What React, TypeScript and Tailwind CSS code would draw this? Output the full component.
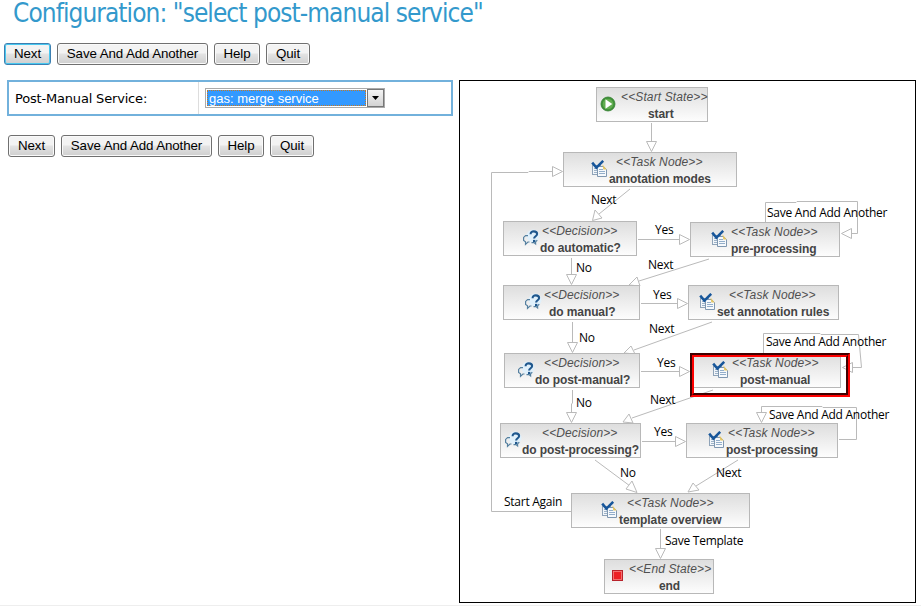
import React from 'react';

type Kind = 'start' | 'task' | 'decision' | 'end';

interface NodeSpec {
  kind: Kind;
  title: string;
  x: number;
  y: number;
  w: number;
  iconX: number;
  typeX: number;
  titleX: number;
}

// Coordinates are relative to the inside of the diagram panel.
const nodes: NodeSpec[] = [
  { kind: 'start', title: 'start', x: 136, y: 6, w: 112, iconX: 140, typeX: 161, titleX: 188 },
  { kind: 'task', title: 'annotation modes', x: 103, y: 71, w: 174, iconX: 131, typeX: 156, titleX: 149 },
  { kind: 'decision', title: 'do automatic?', x: 43, y: 140, w: 134, iconX: 62, typeX: 82, titleX: 80 },
  { kind: 'task', title: 'pre-processing', x: 230, y: 141, w: 150, iconX: 251, typeX: 271, titleX: 271 },
  { kind: 'decision', title: 'do manual?', x: 43, y: 204, w: 137, iconX: 64, typeX: 84, titleX: 89 },
  { kind: 'task', title: 'set annotation rules', x: 228, y: 204, w: 151, iconX: 239, typeX: 269, titleX: 257 },
  { kind: 'decision', title: 'do post-manual?', x: 44, y: 272, w: 136, iconX: 57, typeX: 84, titleX: 75 },
  { kind: 'task', title: 'post-manual', x: 231, y: 272, w: 150, iconX: 252, typeX: 272, titleX: 280 },
  { kind: 'decision', title: 'do post-processing?', x: 40, y: 342, w: 141, iconX: 44, typeX: 82, titleX: 62 },
  { kind: 'task', title: 'post-processing', x: 226, y: 342, w: 152, iconX: 248, typeX: 268, titleX: 266 },
  { kind: 'task', title: 'template overview', x: 111, y: 412, w: 179, iconX: 141, typeX: 167, titleX: 159 },
  { kind: 'end', title: 'end', x: 144, y: 478, w: 110, iconX: 150, typeX: 169, titleX: 199 },
];

const typeNames: Record<Kind, string> = {
  start: '<<Start State>>',
  task: '<<Task Node>>',
  decision: '<<Decision>>',
  end: '<<End State>>',
};

const labels: { text: string; x: number; y: number }[] = [
  { text: 'Next', x: 131, y: 111 },
  { text: 'Yes', x: 195, y: 141 },
  { text: 'Save And Add Another', x: 307, y: 124 },
  { text: 'No', x: 116, y: 179 },
  { text: 'Next', x: 188, y: 176 },
  { text: 'Yes', x: 193, y: 206 },
  { text: 'No', x: 119, y: 249 },
  { text: 'Next', x: 189, y: 240 },
  { text: 'Save And Add Another', x: 306, y: 253 },
  { text: 'Yes', x: 197, y: 274 },
  { text: 'No', x: 116, y: 314 },
  { text: 'Next', x: 190, y: 311 },
  { text: 'Save And Add Another', x: 309, y: 326 },
  { text: 'Yes', x: 194, y: 343 },
  { text: 'No', x: 160, y: 384 },
  { text: 'Next', x: 256, y: 384 },
  { text: 'Start Again', x: 44, y: 413 },
  { text: 'Save Template', x: 205, y: 452 },
];

// Each edge is a polyline plus the outline of its arrow head.
const edges: { line: string; head: string }[] = [
  { line: '191.5,42 191.5,61', head: '186.5,60.5 196.5,60.5 191.5,70.5' },
  { line: '111,430.5 31.5,430.5 31.5,91.5 68,91.5 69,90.5 92,90.5', head: '92.5,85.5 92.5,95.5 102.5,90.5' },
  { line: '170,108 139,133', head: '135,129 142,137 132.5,139.5' },
  { line: '178,158.5 219,158.5', head: '219.5,153.5 219.5,163.5 229.5,158.5' },
  { line: '305.5,141 305.5,121.5 336,121.5 337,120.5 397.5,120.5 397.5,152.5 391,152.5', head: '391.5,147.5 391.5,157.5 381.5,152.5' },
  { line: '111.5,177 111.5,194', head: '106.5,193.5 116.5,193.5 111.5,203.5' },
  { line: '249,178 179,200', head: '177,196 180,205 169,204' },
  { line: '181,222.5 217,222.5', head: '217.5,217.5 217.5,227.5 227.5,222.5' },
  { line: '112.5,241 112.5,262', head: '107.5,261.5 117.5,261.5 112.5,271.5' },
  { line: '252,241 174,269', head: '171,265 175,273 164,272' },
  { line: '303.5,272 303.5,252.5 360,252.5 361,253.5 398.5,253.5 401.5,286.5 392,286.5', head: '392.5,281.5 392.5,291.5 382.5,286.5' },
  { line: '181,290.5 219,290.5', head: '219.5,285.5 219.5,295.5 229.5,290.5' },
  { line: '112.5,309 112.5,322 111.5,323 111.5,331', head: '106.5,331.5 116.5,331.5 111.5,341.5' },
  { line: '253,309 172,337', head: '169,333 173,342 163,341' },
  { line: '379,358.5 396.5,358.5 396.5,326.5 363,326.5 362,325.5 301.5,325.5 301.5,331', head: '296.5,331.5 306.5,331.5 301.5,341.5' },
  { line: '182,360.5 215,360.5', head: '215.5,355.5 215.5,365.5 225.5,360.5' },
  { line: '135,379 170,405', head: '166,408 172,400 177,411.5' },
  { line: '278,379 236,405', head: '233,402 239,409 228,411' },
  { line: '200.5,448 200.5,467', head: '195.5,467.5 205.5,467.5 200.5,477.5' },
];

function NodeIcon({ kind }: { kind: Kind }) {
  if (kind === 'start') {
    return (
      <svg width="16" height="16" viewBox="0 0 16 16">
        <circle cx="8" cy="8" r="7" fill="#3f9238" stroke="#347d31" strokeWidth="0.8" />
        <circle cx="8" cy="8" r="5.3" fill="#62ad50" />
        <path d="M5.5 3.2v9.6L12.3 8z" fill="#fff" />
      </svg>
    );
  }
  if (kind === 'end') {
    return (
      <svg width="16" height="16" viewBox="0 0 16 16">
        <rect x="2.5" y="2.5" width="10" height="10" fill="#e84349" stroke="#b8222b" />
        <rect x="3.5" y="3.5" width="8" height="8" fill="#ed2025" stroke="#f48080" strokeWidth="0.8" />
      </svg>
    );
  }
  if (kind === 'decision') {
    return (
      <svg width="18" height="18" viewBox="0 0 18 18">
        <circle cx="11" cy="7" r="6.5" fill="#e0f0fb" />
        <path
          d="M6 6.6H3.6L1.6 8.4v3l1.9 1.4v2.6l2.4-2.4h1.6M13.5 12.8l1.8-1.5M9.5 13.6h2.5l1.6 1.4v-2"
          fill="none"
          stroke="#5580a0"
          strokeWidth="1.2"
        />
        <path d="M8.6 5.2C8.6 3.2 9.9 2.4 11.8 2.4c2 0 3.3 1 3.3 2.6 0 2.3-3 2.2-3 4.6" fill="none" stroke="#1f578d" strokeWidth="2.1" />
        <rect x="11" y="10.9" width="2.3" height="2.2" fill="#1f578d" />
      </svg>
    );
  }
  return (
    <svg width="17" height="18" viewBox="0 0 17 18">
      <rect x="1.5" y="5.5" width="8" height="9" fill="#f2f6fa" stroke="#8fa3b8" />
      <path d="M3 8.5h3M3 10.5h3M3 12.5h3" stroke="#9db2c7" />
      <path d="M6.5 6.5h6l3 3v7h-9z" fill="#f6f9fc" stroke="#7f97b0" />
      <path d="M11.5 4.5l4.2 5h-3.4z" fill="#e3c565" />
      <path d="M8 9.5h4M8 11.5h6M8 13.5h6" stroke="#93aeca" />
      <path d="M1.2 2.6L5.4 7.6L12.2 0.8" fill="none" stroke="#17569a" strokeWidth="2.5" />
    </svg>
  );
}

function DiagramNode({ node }: { node: NodeSpec }) {
  return (
    <>
      <div
        className="absolute h-[35px] border border-[#b8b8b8] bg-linear-to-b from-[#dedede] to-[#fdfdfd]"
        style={{ left: node.x, top: node.y, width: node.w }}
      />
      <div className="absolute" style={{ left: node.iconX, top: node.y + (node.kind === 'start' || node.kind === 'end' ? 9 : 8) }}>
        <NodeIcon kind={node.kind} />
      </div>
      <span
        className="absolute text-[12px] leading-[14px] tracking-[0.12px] whitespace-nowrap text-[#505050] italic"
        style={{ left: node.typeX, top: node.y + 3 }}
      >
        {typeNames[node.kind]}
      </span>
      <span
        className="absolute text-[12px] leading-[14px] font-bold tracking-[-0.09px] whitespace-nowrap text-[#444]"
        style={{ left: node.titleX, top: node.y + 20 }}
      >
        {node.title}
      </span>
    </>
  );
}

const buttonNames = [
  { name: 'Next', width: 'w-[47px]' },
  { name: 'Save And Add Another', width: 'w-[151px]' },
  { name: 'Help', width: 'w-[46px]' },
  { name: 'Quit', width: 'w-[44px]' },
];

function Toolbar({ active = false }: { active?: boolean }) {
  return (
    <div className="flex gap-[6px]">
      {buttonNames.map(({ name, width }, i) => (
        <button
          key={name}
          className={`h-[22px] rounded-[3px] border bg-linear-to-b from-[#f3f3f3] from-45% via-[#e3e3e3] via-50% to-[#cfcfcf] text-[13.33px] leading-[20px] tracking-[-0.1px] whitespace-nowrap text-black ${width} ${
            active && i === 0 ? 'border-[#3c7fb1] shadow-[inset_0_0_0_1px_#48c8f0]' : 'border-[#707070] shadow-[inset_0_0_0_1px_#fafafa]'
          }`}
        >
          {name}
        </button>
      ))}
    </div>
  );
}

export default function App() {
  return (
    <div className="flex h-[606px] w-[921px] flex-col overflow-hidden border-b border-[#eee] bg-white font-['Liberation_Sans',Arial,sans-serif] text-black">
      <h1 className="h-[43px] pl-[13px] font-['DejaVu_Sans_Condensed','DejaVu_Sans',sans-serif] text-[26px] leading-[26px] font-normal tracking-[-0.94px] whitespace-nowrap text-[#3399cc]">
        Configuration: "select post-manual service"
      </h1>
      <div className="pl-1">
        <Toolbar active />
      </div>
      <main className="mt-[15px] flex">
        <section className="w-[459px] pl-[7px]">
          <div className="flex h-9 w-[446px] border-2 border-[#72b1dc]">
            <label className="w-[190px] border-r border-[#ddd] pl-[6px] font-['DejaVu_Sans',Verdana,sans-serif] text-[13px] leading-[33px] tracking-[-0.18px] whitespace-nowrap">
              Post-Manual Service:
            </label>
            <div className="mt-[6px] ml-[6px] flex h-[20px] w-[180px] border border-[#aaa] p-px">
              <div className="w-[159px] border border-dotted border-[#c87920] bg-[#3399ff] pl-px text-[13px] leading-[15px] whitespace-nowrap text-white">
                gas: merge service
              </div>
              <div className="-mt-px -mr-px ml-auto flex h-[18px] w-[17px] items-center justify-center border border-[#777] bg-linear-to-b from-[#f4f4f4] to-[#d3d3d3]">
                <svg width="7" height="4" viewBox="0 0 7 4">
                  <path d="M0 0h7L3.5 4z" />
                </svg>
              </div>
            </div>
          </div>
          <div className="mt-[19px] pl-px">
            <Toolbar />
          </div>
        </section>
        <section className="relative h-[523px] w-[457px] border border-black">
          <svg className="absolute top-0 left-0" width="455" height="521" viewBox="0 0 455 521">
            {edges.map((edge) => (
              <g key={edge.head} stroke="#bababa" strokeWidth="1">
                <polyline points={edge.line} fill="none" />
                <polygon points={edge.head} fill="#fff" />
              </g>
            ))}
          </svg>
          {nodes.map((node) => (
            <DiagramNode key={node.title} node={node} />
          ))}
          <div className="absolute top-[272px] left-[230px] h-[44px] w-[160px] border-2 border-t-[#400000] border-r-[#ff0000] border-b-[#ff0000] border-l-[#400000]">
            <div className="h-full border-2 border-t-[#ff0000] border-r-[#400000] border-b-[#400000] border-l-[#ff0000]" />
          </div>
          {labels.map((label) => (
            <span
              key={`${label.x}-${label.y}`}
              className="absolute font-['Open_Sans',sans-serif] text-[12px] leading-4 tracking-[-0.26px] whitespace-nowrap text-black"
              style={{ left: label.x, top: label.y }}
            >
              {label.text}
            </span>
          ))}
        </section>
      </main>
    </div>
  );
}
